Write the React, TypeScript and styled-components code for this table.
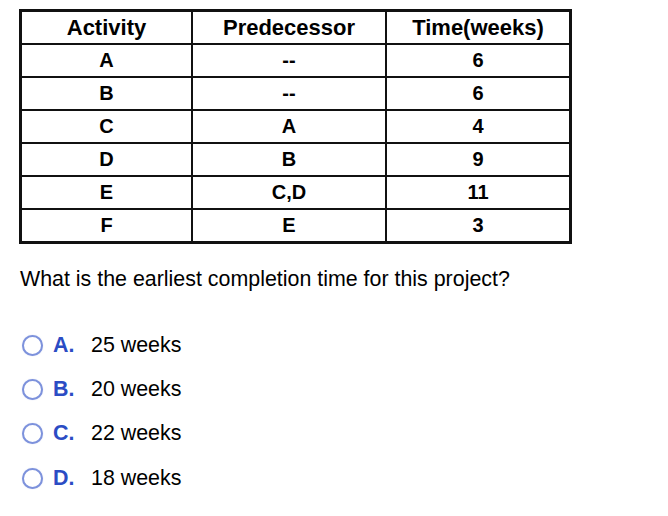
import React from "react";
import styled, { createGlobalStyle } from "styled-components";

const GlobalStyle = createGlobalStyle`
    body {
        margin: 0;
        background: #ffffff;
        font-family: "Liberation Sans", Arial, sans-serif;
        color: #000000;
    }
`;

const Page = styled.div`
    padding: 9px 0 0 19px;
`;

const Table = styled.table`
    border-collapse: collapse;
    border: 3px solid #111;
    table-layout: fixed;
`;

const HeadCell = styled.th<{ $width: number }>`
    width: ${props => props.$width}px;
    height: 31px;
    padding: 0;
    border: 2px solid #111;
    font-size: 22px;
    font-weight: bold;
    text-align: center;
    vertical-align: middle;
`;

const Cell = styled.td`
    height: 31px;
    padding: 0;
    border: 2px solid #111;
    font-size: 20px;
    font-weight: bold;
    text-align: center;
    vertical-align: middle;
`;

const Question = styled.p`
    margin: 23px 0 0 1px;
    font-size: 21.4px;
    line-height: 24px;
`;

const Options = styled.div`
    display: flex;
    flex-direction: column;
    margin-top: 32px;
`;

const Option = styled.label`
    display: flex;
    align-items: center;
    height: 44.3px;
    font-size: 21.4px;
`;

const Radio = styled.span`
    box-sizing: border-box;
    width: 21px;
    height: 21px;
    margin-left: 3px;
    border: 2px solid #7d92dc;
    border-radius: 50%;
    background: #ffffff;
    box-shadow: 0 0 1px rgba(125, 146, 220, 0.5);
`;

const Letter = styled.span`
    width: 38px;
    margin-left: 10px;
    color: #2b4cc4;
    font-weight: bold;
`;

interface Row {
    activity: string;
    predecessor: string;
    time: number;
}

const rows: Row[] = [
    { activity: "A", predecessor: "--", time: 6 },
    { activity: "B", predecessor: "--", time: 6 },
    { activity: "C", predecessor: "A", time: 4 },
    { activity: "D", predecessor: "B", time: 9 },
    { activity: "E", predecessor: "C,D", time: 11 },
    { activity: "F", predecessor: "E", time: 3 },
];

const answers = [
    { letter: "A.", text: "25 weeks" },
    { letter: "B.", text: "20 weeks" },
    { letter: "C.", text: "22 weeks" },
    { letter: "D.", text: "18 weeks" },
];

const App = () => {
    return (
        <Page>
            <GlobalStyle />
            <Table>
                <thead>
                    <tr>
                        <HeadCell $width={169}>Activity</HeadCell>
                        <HeadCell $width={192}>Predecessor</HeadCell>
                        <HeadCell $width={182}>Time(weeks)</HeadCell>
                    </tr>
                </thead>
                <tbody>
                    {rows.map(row => (
                        <tr key={row.activity}>
                            <Cell>{row.activity}</Cell>
                            <Cell>{row.predecessor}</Cell>
                            <Cell>{row.time}</Cell>
                        </tr>
                    ))}
                </tbody>
            </Table>
            <Question>What is the earliest completion time for this project?</Question>
            <Options>
                {answers.map(answer => (
                    <Option key={answer.letter}>
                        <Radio />
                        <Letter>{answer.letter}</Letter>
                        <span>{answer.text}</span>
                    </Option>
                ))}
            </Options>
        </Page>
    );
};

export default App;
